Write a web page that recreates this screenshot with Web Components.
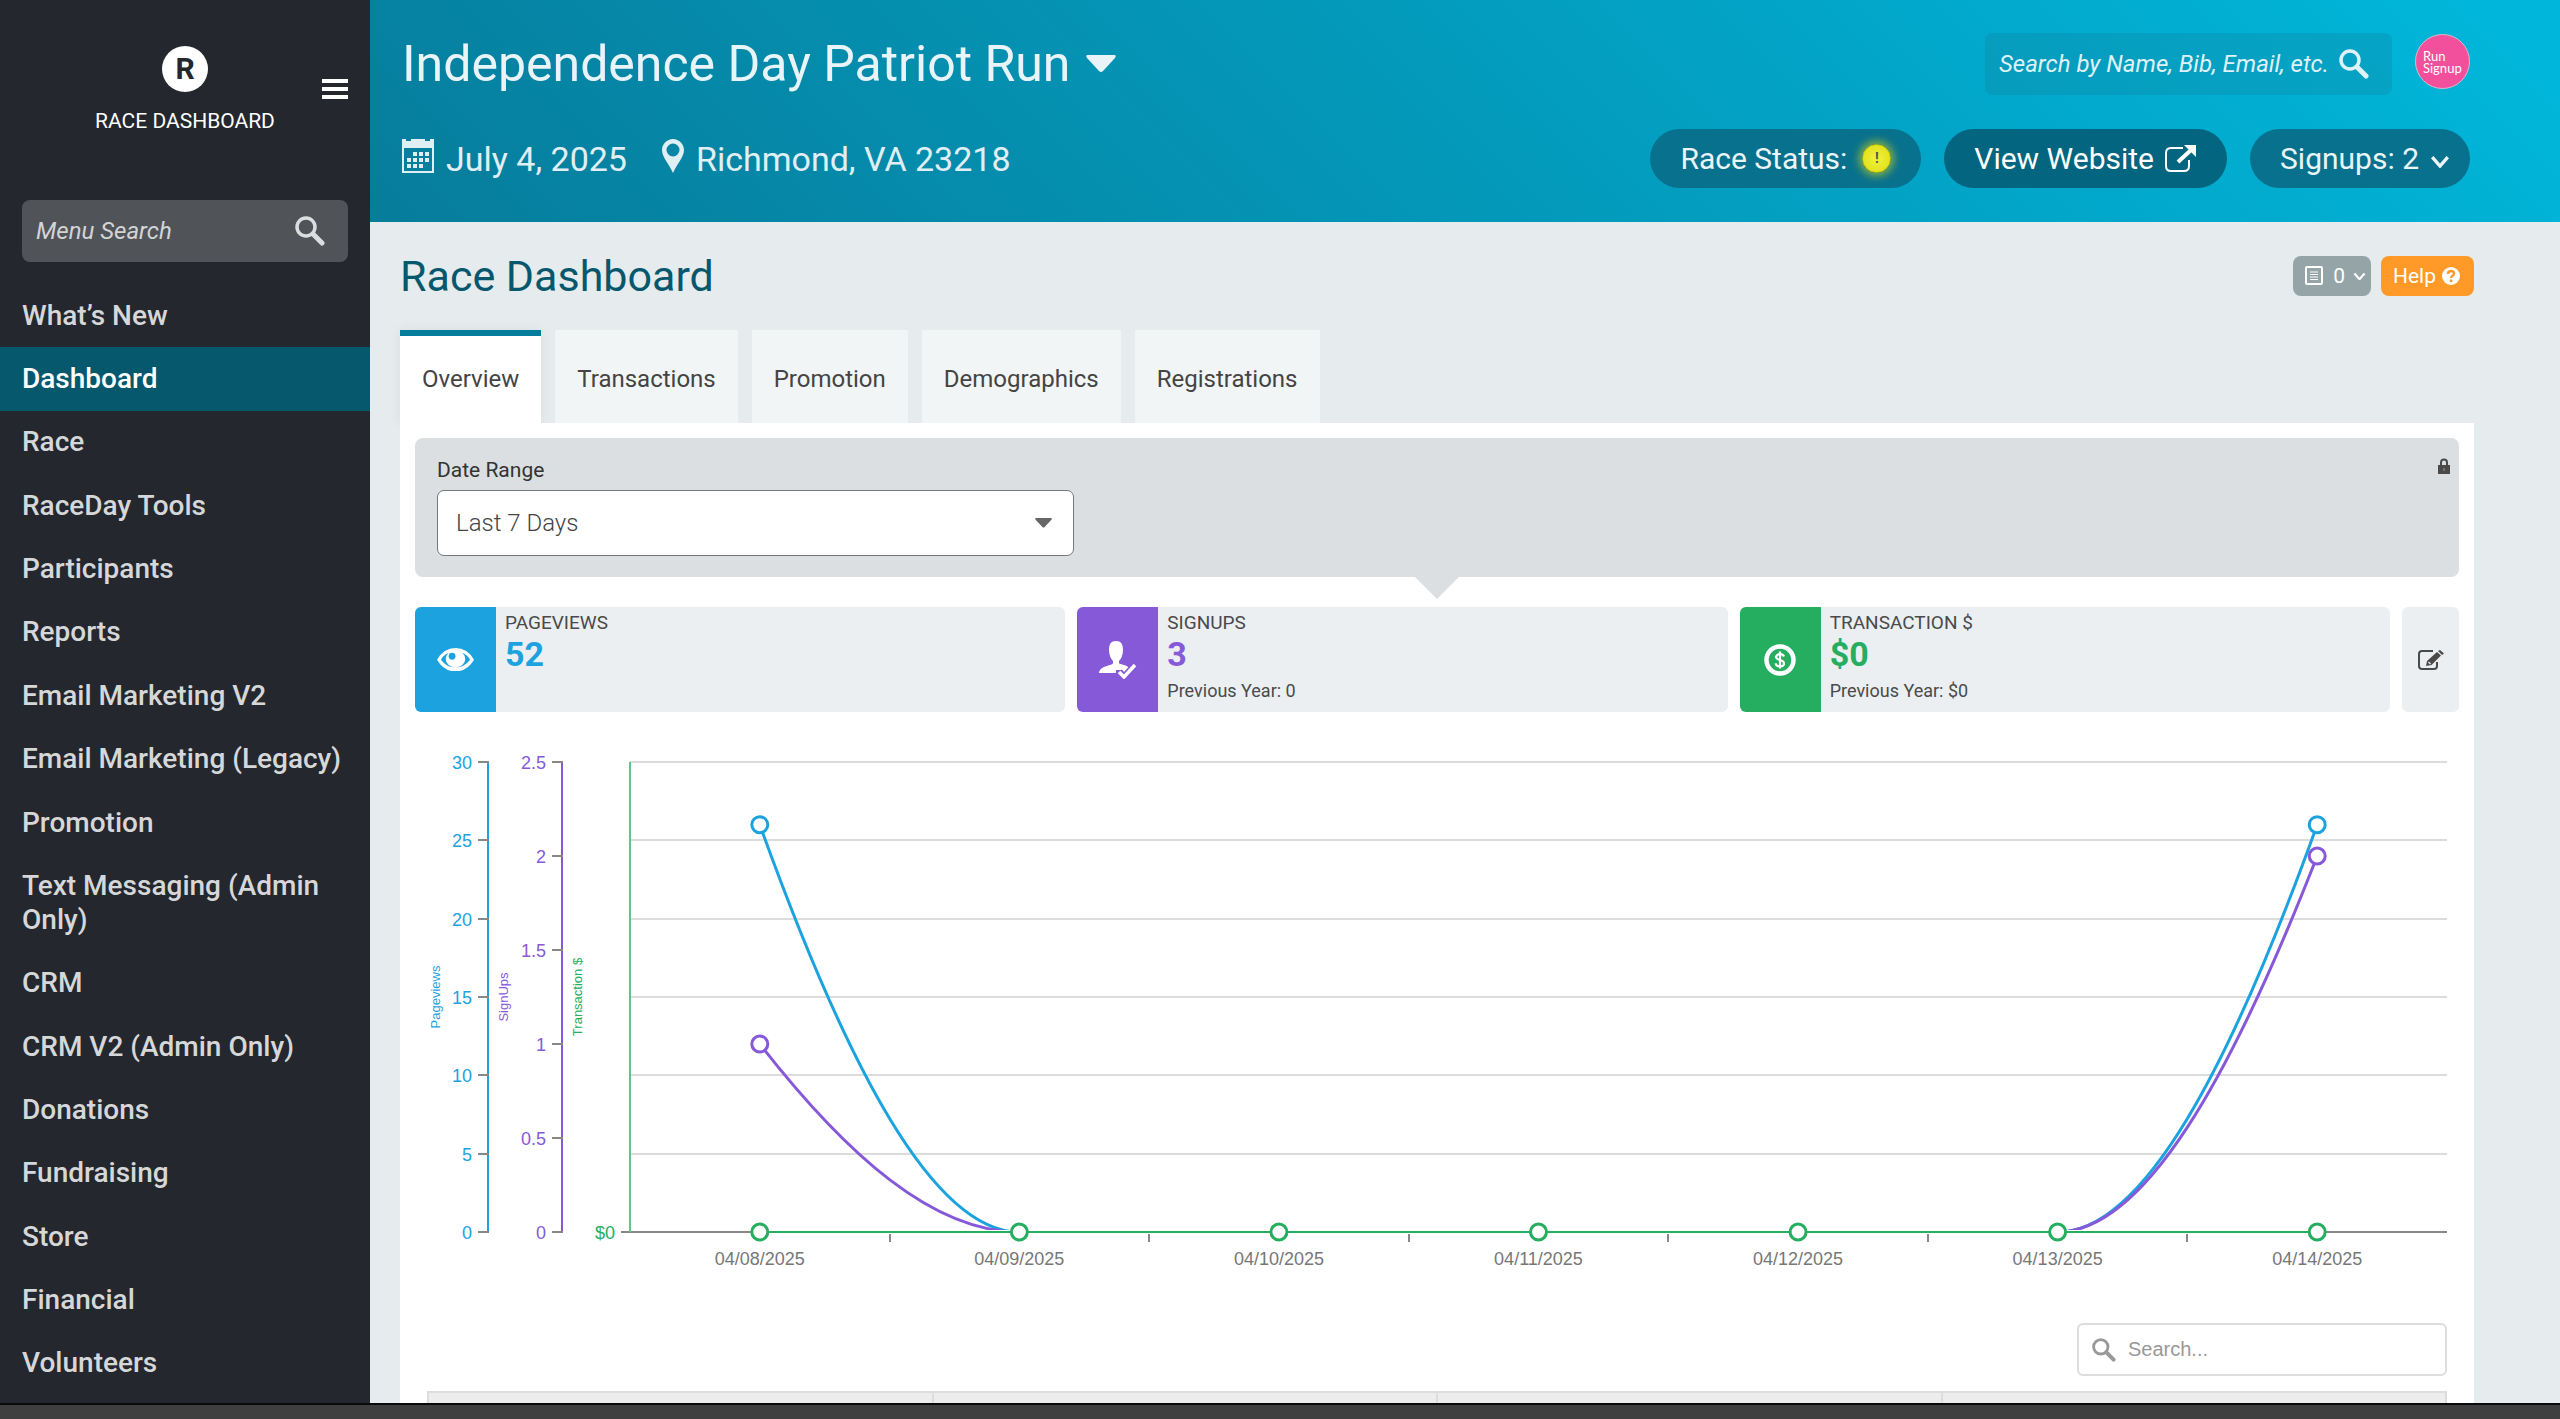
<!DOCTYPE html>
<html lang="en">
<head>
<meta charset="utf-8">
<meta name="viewport" content="width=device-width, initial-scale=1">
<title>Race Dashboard</title>
<style>
  html, body {
    height: 100%;
    margin: 0;
  }
  body {
    font-family: Roboto, "Liberation Sans", sans-serif;
    color: #4a4a4a;
    background: #e6ebee;
  }
</style>
</head>
<body>
<race-app>
  <race-sidebar slot="sidebar"></race-sidebar>
  <race-header slot="header" name="Independence Day Patriot Run" date="July 4, 2025" place="Richmond, VA 23218"></race-header>
  <page-heading>Race Dashboard</page-heading>
  <race-tabs></race-tabs>
  <dashboard-panel>
    <date-filter></date-filter>
    <stat-row>
      <stat-card color="#1ca3df" icon="eye" value="52">Pageviews</stat-card>
      <stat-card color="#8659d9" icon="userCheck" value="3" previous="0">Signups</stat-card>
      <stat-card color="#25ae60" icon="dollar" value="$0" previous="$0">Transaction $</stat-card>
    </stat-row>
    <trend-chart></trend-chart>
    <report-table></report-table>
  </dashboard-panel>
</race-app>

<script>
const ICONS = {
  menu: ['0 0 26 20', '<path fill="currentColor" d="M0 0h26v4H0zM0 8h26v4H0zM0 16h26v4H0z"/>'],
  search: ['0 0 30 30', '<circle cx="11" cy="11" r="9" fill="none" stroke="currentColor" stroke-width="3.500"/><path d="M18 18l9 9" stroke="currentColor" stroke-width="5" stroke-linecap="round"/>'],
  caret: ['0 0 30 18', '<path fill="currentColor" d="M2 0h26q3 0 1 3L17 16q-2 2-4 0L1 3Q-1 0 2 0z"/>'],
  calendar: ['0 0 32 34', '<path fill="currentColor" fill-rule="evenodd" d="M0 0h4v2h5V0h14v2h5V0h4v34H0zM2 9v23h28V9z"/><path fill="currentColor" d="M11 13h4v4h-4zM17 13h4v4h-4zM23 13h4v4h-4zM5 19h4v4H5zM11 19h4v4h-4zM17 19h4v4h-4zM23 19h4v4h-4zM5 25h4v4H5zM11 25h4v4h-4zM17 25h4v4h-4z"/>'],
  pin: ['0 0 22 34', '<path fill="currentColor" fill-rule="evenodd" d="M11 0C5 0 0 5 0 11c0 7 7 14 11 23 4-9 11-16 11-23C22 5 17 0 11 0zM11 4.500a6.500 6.500 0 1 1 0 13 6.500 6.500 0 0 1 0-13z"/>'],
  external: ['0 0 32 28', '<path d="M18 3H6Q1 3 1 8v13q0 5 5 5h13q5 0 5-5v-6" fill="none" stroke="currentColor" stroke-width="2"/><path d="M13 17L26 5" stroke="currentColor" stroke-width="4"/><path fill="currentColor" d="M19 0h12v12z"/>'],
  chevron: ['0 0 18 12', '<path d="M2 2l7 8 7-8" fill="none" stroke="currentColor" stroke-width="3"/>'],
  note: ['0 0 18 20', '<rect x="1" y="1" width="16" height="17" rx="1" fill="none" stroke="currentColor" stroke-width="2"/><path d="M5 6h8M5 8.500h8M5 11h8M5 13.500h8" stroke="currentColor" stroke-width="1"/>'],
  help: ['0 0 18 18', '<circle cx="9" cy="9" r="9" fill="currentColor"/><path d="M6 7q0-3 3-3t3 2.500Q12 8 10.500 8.800 9 9.600 9 11" fill="none" stroke="#ff9a28" stroke-width="2.400"/><circle cx="9" cy="13.800" r="1.500" fill="#ff9a28"/>'],
  lock: ['0 0 12 16', '<path d="M3 8V4.500a3 3 0 0 1 6 0V8" fill="none" stroke="currentColor" stroke-width="2"/><path fill="currentColor" d="M0 7h12v9H0z"/><path d="M6 10v3" stroke="#999" stroke-width="1"/>'],
  eye: ['0 0 38 24', '<path fill="currentColor" fill-rule="evenodd" d="M0 12Q7 0 19 0t19 12Q31 24 19 24T0 12zM4 12q6 8 15 8t15-8Q31 7 26 5q3 3 3 6.500a10 8.500 0 0 1-20 0Q9 8 12 5 7 7 4 12z"/><ellipse cx="15.500" cy="8.500" rx="3.500" ry="3.500" fill="#1ca3df"/>'],
  userCheck: ['0 0 38 38', '<path fill="currentColor" d="M17 0c5 0 7 3 7 9 0 5-2 9-4 11v2c0 2 10 1 11 7l-5 4-3-4h-6v3H0c1-8 14-7 14-10v-2c-2-2-4-6-4-11 0-6 2-9 7-9z"/><path d="M20 31l5 5 11-12" fill="none" stroke="#8659d9" stroke-width="7"/><path d="M20 31l5 5 11-12" fill="none" stroke="currentColor" stroke-width="3.500"/>'],
  dollar: ['0 0 32 32', '<circle cx="16" cy="16" r="13.500" fill="none" stroke="currentColor" stroke-width="4.500"/><path d="M20 12.500q-1-2.500-4-2.500t-4 2.800q0 2.200 4 3.200t4 3.400Q20 22.300 16 22.300t-4.300-3M16 7.500v17" fill="none" stroke="currentColor" stroke-width="2.200"/>'],
  edit: ['0 0 26 20', '<path d="M15 1H4Q1 1 1 4v12q0 3 3 3h12q3 0 3-3v-4" fill="none" stroke="currentColor" stroke-width="2"/><path fill="currentColor" d="M9 11L19 2l4 3.600L13.500 15 8 16zM20 1l2-1 4 3.500-2 1.500z"/><path d="M10.500 12l2 2" stroke="#eaedf1" stroke-width="1.500"/>']
};

function icon(name, width) {
  const [box, body] = ICONS[name];
  return `<svg class="icon icon--${name}" viewBox="${box}" width="${width}" aria-hidden="true">${body}</svg>`;
}

class RaceApp extends HTMLElement {
  constructor() {
    super();
    this.attachShadow({ mode: 'open' });
  }

  connectedCallback() {
    this.shadowRoot.innerHTML = `
      <style>
        :host {
          display: grid;
          grid-template-columns: 370px minmax(0, 1fr);
          grid-template-rows: minmax(0, 1fr) 16px;
          height: 100vh;
          overflow: hidden;
        }
        .content {
          display: flex;
          flex-direction: column;
          overflow: hidden;
        }
        main {
          display: flex;
          flex-direction: column;
          padding: 34px 86px 0 30px;
        }
        footer {
          grid-column: 1 / -1;
          box-sizing: border-box;
          background: #3f3f3f;
          border-top: 2px solid #0a0a0a;
        }
      </style>
      <slot name="sidebar"></slot>
      <div class="content">
        <slot name="header"></slot>
        <main><slot></slot></main>
      </div>
      <footer></footer>
    `;
  }
}

class RaceSidebar extends HTMLElement {
  constructor() {
    super();
    this.attachShadow({ mode: 'open' });
  }

  connectedCallback() {
    const items = [
      'What’s New', 'Dashboard', 'Race', 'RaceDay Tools', 'Participants', 'Reports',
      'Email Marketing V2', 'Email Marketing (Legacy)', 'Promotion',
      'Text Messaging (Admin Only)', 'CRM', 'CRM V2 (Admin Only)', 'Donations',
      'Fundraising', 'Store', 'Financial', 'Volunteers'
    ];
    this.shadowRoot.innerHTML = `
      <style>
        :host {
          display: flex;
          flex-direction: column;
          min-height: 0;
          overflow: hidden;
          background: #24272d;
          color: #fff;
        }
        .brand {
          position: relative;
          display: flex;
          flex-direction: column;
          align-items: center;
          padding-top: 46px;
          height: 154px;
        }
        .brand__mark {
          width: 46px;
          height: 46px;
          margin-bottom: 16px;
          border-radius: 50%;
          background: #fff;
          color: #24272d;
          font-size: 30px;
          font-weight: 700;
          line-height: 46px;
          text-align: center;
        }
        .brand__name {
          font-size: 21px;
          line-height: 26px;
          text-transform: uppercase;
        }
        .brand__toggle {
          position: absolute;
          top: 79px;
          right: 22px;
          padding: 0;
          border: 0;
          background: none;
          color: inherit;
        }
        svg {
          display: block;
        }
        .search {
          display: flex;
          align-items: center;
          box-sizing: border-box;
          height: 62px;
          margin: 0 22px 22px;
          padding: 0 23px 0 14px;
          border-radius: 8px;
          background: #505358;
          color: #dcdddf;
        }
        .search input {
          flex: 1;
          min-width: 0;
          padding: 0;
          border: 0;
          outline: 0;
          background: none;
          color: inherit;
          font: italic 24px Roboto, sans-serif;
        }
        .search input::placeholder {
          color: #d3d4d6;
          opacity: 1;
        }
        nav {
          display: flex;
          flex: 1;
          flex-direction: column;
          padding-bottom: 8px;
        }
        nav a {
          display: flex;
          flex: 1 0 auto;
          align-items: center;
          padding: 14px 22px;
          color: #d6d7d9;
          font-size: 28px;
          font-weight: 500;
          line-height: 34px;
          text-decoration: none;
        }
        nav a[aria-current] {
          background: #06586d;
          color: #fff;
        }
      </style>
      <div class="brand">
        <div class="brand__mark">R</div>
        <div class="brand__name">Race Dashboard</div>
        <button class="brand__toggle" aria-label="Toggle menu">${icon('menu', 26)}</button>
      </div>
      <label class="search">
        <input type="text" placeholder="Menu Search" aria-label="Menu Search">
        ${icon('search', 30)}
      </label>
      <nav>
        ${items.map(item => `<a href="#"${item === 'Dashboard' ? ' aria-current="page"' : ''}>${item}</a>`).join('')}
      </nav>
    `;
  }
}

class RaceHeader extends HTMLElement {
  constructor() {
    super();
    this.attachShadow({ mode: 'open' });
  }

  connectedCallback() {
    this.shadowRoot.innerHTML = `
      <style>
        :host {
          display: flex;
          flex-direction: column;
          gap: 34px;
          padding: 33px 90px 34px 32px;
          background: linear-gradient(45deg, #077c9b, #00b8dc);
          color: #e9f4f8;
        }
        .row {
          display: flex;
          align-items: center;
          justify-content: space-between;
        }
        .group, .group > span {
          display: flex;
          align-items: center;
        }
        svg {
          display: block;
        }
        h1 {
          display: flex;
          align-items: center;
          gap: 16px;
          margin: 0;
          font-size: 50px;
          font-weight: 400;
          line-height: 62px;
        }
        .facts {
          gap: 35px;
          color: #e0eff4;
          font-size: 34px;
          line-height: 44px;
        }
        .facts > span {
          gap: 12px;
        }
        .facts .icon {
          margin-bottom: 6px;
        }
        .search {
          display: flex;
          align-items: center;
          box-sizing: border-box;
          width: 407px;
          height: 62px;
          padding: 0 23px 0 14px;
          border-radius: 8px;
          background: rgba(16, 128, 160, 0.3);
          color: #dff2f7;
        }
        .search input {
          flex: 1;
          min-width: 0;
          padding: 0;
          border: 0;
          outline: 0;
          background: none;
          color: inherit;
          font: italic 24px Roboto, sans-serif;
        }
        .search input::placeholder {
          color: #dff2f7;
          opacity: 1;
        }
        .avatar {
          box-sizing: border-box;
          width: 55px;
          height: 55px;
          margin: 0 0 5px 23px;
          padding: 0 0 0 7px;
          border: 1px solid #d9b8cc;
          border-radius: 50%;
          background: #f2509d;
          color: #fff;
          font: 13px/12px Lato, sans-serif;
          text-align: left;
        }
        .pills {
          gap: 23px;
        }
        .pill {
          display: flex;
          align-items: center;
          gap: 11px;
          box-sizing: border-box;
          height: 59px;
          padding: 0 30px;
          border: 0;
          border-radius: 30px;
          background: #08718d;
          color: #eaf5f8;
          font: 30px Roboto, sans-serif;
          text-decoration: none;
        }
        .pill--strong {
          background: #03657f;
          color: #fff;
        }
        .pill .icon--chevron {
          margin: 6px -10px 0 0;
        }
        .status {
          box-sizing: border-box;
          width: 29px;
          height: 29px;
          margin-left: 4px;
          border: 1px solid #c4c400;
          border-radius: 50%;
          background: radial-gradient(#f2f23c, #dcdc14);
          box-shadow: 0 0 8px 3px rgba(220, 220, 20, 0.6);
          color: #555;
          font-size: 14px;
          font-weight: 700;
          line-height: 27px;
          text-align: center;
        }
      </style>
      <div class="row">
        <h1>${this.getAttribute('name')} ${icon('caret', 30)}</h1>
        <div class="group">
          <label class="search">
            <input type="text" placeholder="Search by Name, Bib, Email, etc." aria-label="Search by Name, Bib, Email, etc.">
            ${icon('search', 30)}
          </label>
          <button class="avatar" aria-label="Account">Run<br>Signup</button>
        </div>
      </div>
      <div class="row">
        <div class="group facts">
          <span>${icon('calendar', 32)}${this.getAttribute('date')}</span>
          <span>${icon('pin', 22)}${this.getAttribute('place')}</span>
        </div>
        <div class="group pills">
          <button class="pill">Race Status: <span class="status">!</span></button>
          <a class="pill pill--strong" href="#">View Website ${icon('external', 32)}</a>
          <button class="pill">Signups: 2 ${icon('chevron', 20)}</button>
        </div>
      </div>
    `;
  }
}

class PageHeading extends HTMLElement {
  constructor() {
    super();
    this.attachShadow({ mode: 'open' });
  }

  connectedCallback() {
    this.shadowRoot.innerHTML = `
      <style>
        :host {
          display: flex;
          align-items: center;
          gap: 10px;
          margin-bottom: 34px;
        }
        h2 {
          flex: 1;
          margin: 0;
          color: #06586d;
          font-size: 43px;
          font-weight: 400;
          line-height: 38px;
        }
        button {
          display: flex;
          align-items: center;
          gap: 6px;
          height: 40px;
          padding: 0 14px 0 12px;
          border: 0;
          border-radius: 8px;
          background: #ff9a28;
          color: #fff;
          font: 21px Roboto, sans-serif;
        }
        .notes {
          gap: 8px;
          padding: 0 5px 0 12px;
          background: #94a4a7;
        }
        .icon--note {
          margin-right: 2px;
        }
      </style>
      <h2><slot></slot></h2>
      <button class="notes" aria-label="Notes">${icon('note', 18)}0${icon('chevron', 13)}</button>
      <button>Help ${icon('help', 18)}</button>
    `;
  }
}

class RaceTabs extends HTMLElement {
  constructor() {
    super();
    this.attachShadow({ mode: 'open' });
  }

  connectedCallback() {
    const tabs = ['Overview', 'Transactions', 'Promotion', 'Demographics', 'Registrations'];
    this.shadowRoot.innerHTML = `
      <style>
        :host {
          display: flex;
          gap: 14px;
        }
        button {
          box-sizing: border-box;
          height: 93px;
          padding: 10px 22px 6px;
          border: 0;
          background: #f2f5f6;
          color: #444;
          font: 24px Roboto, sans-serif;
        }
        button[aria-selected="true"] {
          background: #fff;
          box-shadow: inset 0 6px #067c9c, 0 0 12px rgba(0, 0, 0, 0.06);
        }
      </style>
      ${tabs.map((tab, i) => `<button role="tab" aria-selected="${i === 0}">${tab}</button>`).join('')}
    `;
    this.setAttribute('role', 'tablist');
  }
}

class DashboardPanel extends HTMLElement {
  constructor() {
    super();
    this.attachShadow({ mode: 'open' });
  }

  connectedCallback() {
    this.shadowRoot.innerHTML = `
      <style>
        :host {
          display: block;
          position: relative;
          padding: 15px;
          background: #fff;
        }
      </style>
      <slot></slot>
    `;
  }
}

class DateFilter extends HTMLElement {
  constructor() {
    super();
    this.attachShadow({ mode: 'open' });
  }

  connectedCallback() {
    this.shadowRoot.innerHTML = `
      <style>
        :host {
          display: block;
          position: relative;
          padding: 18px 22px 21px;
          border-radius: 8px;
          background: #dbdfe2;
        }
        :host::after {
          content: "";
          position: absolute;
          top: 100%;
          left: calc(50% - 22px);
          border: 22px solid transparent;
          border-top-color: #dbdfe2;
          border-bottom: 0;
        }
        label {
          display: block;
          margin-bottom: 6px;
          color: #333;
          font-size: 21px;
          line-height: 28px;
        }
        .select {
          display: flex;
          position: relative;
          max-width: 637px;
        }
        select {
          flex: 1;
          height: 66px;
          padding: 0 18px;
          appearance: none;
          border: 1px solid #777;
          border-radius: 7px;
          background: #fff;
          color: #444;
          font: 300 24px Roboto, sans-serif;
        }
        .select svg {
          position: absolute;
          top: 28px;
          right: 22px;
          color: #666;
        }
        .icon--lock {
          position: absolute;
          top: 20px;
          right: 9px;
          color: #4a4a4a;
        }
      </style>
      <label for="range">Date Range</label>
      <div class="select">
        <select id="range"><option>Last 7 Days</option></select>
        ${icon('caret', 17)}
      </div>
      ${icon('lock', 12)}
    `;
  }
}

class StatRow extends HTMLElement {
  constructor() {
    super();
    this.attachShadow({ mode: 'open' });
  }

  connectedCallback() {
    this.shadowRoot.innerHTML = `
      <style>
        :host {
          display: grid;
          grid-template-columns: repeat(3, minmax(0, 1fr)) 57px;
          gap: 12px;
          margin-top: 30px;
        }
        button {
          display: grid;
          place-items: center;
          padding: 0 0 0 2px;
          border: 0;
          border-radius: 6px;
          background: #ebeff2;
          color: #4a4a4a;
        }
      </style>
      <slot></slot>
      <button aria-label="Edit statistics">${icon('edit', 26)}</button>
    `;
  }
}

class StatCard extends HTMLElement {
  constructor() {
    super();
    this.attachShadow({ mode: 'open' });
  }

  connectedCallback() {
    const previous = this.getAttribute('previous');
    const name = this.getAttribute('icon');
    const sizes = { eye: 37, userCheck: 38, dollar: 32 };
    this.shadowRoot.innerHTML = `
      <style>
        :host {
          display: flex;
          height: 105px;
          overflow: hidden;
          border-radius: 6px;
          background: #ebeff2;
          --accent: ${this.getAttribute('color')};
        }
        .badge {
          display: grid;
          flex: 0 0 81px;
          place-items: center;
          background: var(--accent);
          color: #fff;
        }
        .text {
          padding: 4px 9px;
          color: #4a4a4a;
        }
        .label {
          font-size: 19px;
          line-height: 24px;
          text-transform: uppercase;
        }
        .value {
          color: var(--accent);
          font-size: 34px;
          font-weight: 700;
          line-height: 38px;
        }
        .previous {
          margin-top: 4px;
          font-size: 18px;
          line-height: 28px;
        }
      </style>
      <div class="badge">${icon(name, sizes[name])}</div>
      <div class="text">
        <div class="label"><slot></slot></div>
        <div class="value">${this.getAttribute('value')}</div>
        ${previous === null ? '' : `<div class="previous">Previous Year: ${previous}</div>`}
      </div>
    `;
  }
}

class TrendChart extends HTMLElement {
  constructor() {
    super();
    this.attachShadow({ mode: 'open' });
  }

  connectedCallback() {
    const blue = '#1ca3df';
    const purple = '#8659d9';
    const green = '#25ae60';
    const top = 22;
    const bottom = 492;
    const left = 215;
    const right = 2032;
    const step = (right - left) / 7;
    const days = ['04/08/2025', '04/09/2025', '04/10/2025', '04/11/2025', '04/12/2025', '04/13/2025', '04/14/2025'];
    const x = i => left + step * (i + 0.5);
    const y = (value, max) => bottom - (bottom - top) * value / max;

    const axis = (pos, labels, max, color) => `
      <path d="M${pos} ${top}V${bottom}" stroke="${color}" stroke-width="2"/>
      ${labels.map(v => `
        <path d="M${pos - 10} ${Math.round(y(v, max))}h11" stroke="#888" stroke-width="2"/>
        <text x="${pos - 16}" y="${y(v, max) + 7}" text-anchor="end" fill="${color}">${v}</text>`).join('')}`;

    const title = (tx, text, color) =>
      `<text class="title" transform="translate(${tx} 257) rotate(-90)" text-anchor="middle" fill="${color}">${text}</text>`;

    // Smooth curve, flat where it meets the zero line
    const curve = (first, last, max, color) => {
      const a = y(first, max);
      const b = y(last, max);
      const third = step / 3;
      return `<path fill="none" stroke="${color}" stroke-width="3" d="M${x(0)} ${a}
        C${x(0) + third} ${a + (bottom - a) * 0.59} ${x(1) - third} ${bottom} ${x(1)} ${bottom}
        H${x(5)}
        C${x(5) + third} ${bottom} ${x(6) - third} ${b + (bottom - b) * 0.59} ${x(6)} ${b}"/>`;
    };

    const dot = (i, py, color) =>
      `<circle cx="${x(i)}" cy="${py}" r="8" fill="#fff" stroke="${color}" stroke-width="3"/>`;

    this.shadowRoot.innerHTML = `
      <style>
        :host {
          display: block;
          margin-top: 28px;
        }
        svg {
          display: block;
          width: 100%;
        }
        text {
          font-family: "Liberation Sans", Arial, sans-serif;
          font-size: 18px;
        }
        .title {
          font-size: 13px;
        }
      </style>
      <svg viewBox="0 0 2044 560" role="img" aria-label="Pageviews, signups and transactions by day">
        ${[5, 10, 15, 20, 25, 30].map(v => `<path d="M${left} ${Math.round(y(v, 30))}H${right}" stroke="#dcdcdc" stroke-width="2"/>`).join('')}
        <path d="M${left - 9} ${bottom}H${right}" stroke="#888" stroke-width="2"/>
        ${[1, 2, 3, 4, 5, 6].map(i => `<path d="M${Math.round(left + step * i)} ${bottom}v10" stroke="#888" stroke-width="2"/>`).join('')}
        ${axis(73, [0, 5, 10, 15, 20, 25, 30], 30, blue)}
        ${axis(147, [0, 0.5, 1, 1.5, 2, 2.5], 2.5, purple)}
        <path d="M${left} ${top}V${bottom}" stroke="#5ec489" stroke-width="2"/>
        <text x="200" y="${bottom + 7}" text-anchor="end" fill="${green}">$0</text>
        ${title(25, 'Pageviews', blue)}
        ${title(93, 'SignUps', purple)}
        ${title(167, 'Transaction $', green)}
        ${curve(26, 26, 30, blue)}
        ${curve(1, 2, 2.5, purple)}
        <path d="M${x(0)} ${bottom}H${x(6)}" stroke="#fff" stroke-width="4"/>
        <path d="M${x(0)} ${bottom}H${x(6)}" stroke="${green}" stroke-width="2"/>
        ${dot(0, y(26, 30), blue)}${dot(6, y(26, 30), blue)}
        ${dot(0, y(1, 2.5), purple)}${dot(6, y(2, 2.5), purple)}
        ${days.map((day, i) => `${dot(i, bottom, green)}
          <text x="${x(i)}" y="525" text-anchor="middle" fill="#777">${day}</text>`).join('')}
      </svg>
    `;
  }
}

class ReportTable extends HTMLElement {
  constructor() {
    super();
    this.attachShadow({ mode: 'open' });
  }

  connectedCallback() {
    this.shadowRoot.innerHTML = `
      <style>
        :host {
          display: flex;
          flex-direction: column;
          gap: 15px;
          padding: 23px 12px 0;
        }
        .search {
          display: flex;
          align-items: center;
          align-self: flex-end;
          gap: 12px;
          box-sizing: border-box;
          width: 370px;
          height: 53px;
          padding: 0 13px;
          border: 2px solid #ddd;
          border-radius: 6px;
          color: #999;
        }
        input {
          flex: 1;
          min-width: 0;
          padding: 0;
          border: 0;
          outline: 0;
          background: none;
          font: 20px "Liberation Sans", Arial, sans-serif;
        }
        input::placeholder {
          color: #999;
          opacity: 1;
        }
        table {
          width: 100%;
          table-layout: fixed;
          border-collapse: collapse;
        }
        th {
          height: 50px;
          padding: 0;
          border: 2px solid #ddd;
          background: #ededed;
        }
      </style>
      <label class="search">${icon('search', 24)}<input type="text" placeholder="Search..." aria-label="Search"></label>
      <table>
        <thead><tr><th></th><th></th><th></th><th></th></tr></thead>
      </table>
    `;
  }
}

customElements.define('race-app', RaceApp);
customElements.define('race-sidebar', RaceSidebar);
customElements.define('race-header', RaceHeader);
customElements.define('page-heading', PageHeading);
customElements.define('race-tabs', RaceTabs);
customElements.define('dashboard-panel', DashboardPanel);
customElements.define('date-filter', DateFilter);
customElements.define('stat-row', StatRow);
customElements.define('stat-card', StatCard);
customElements.define('trend-chart', TrendChart);
customElements.define('report-table', ReportTable);
</script>
</body>
</html>
